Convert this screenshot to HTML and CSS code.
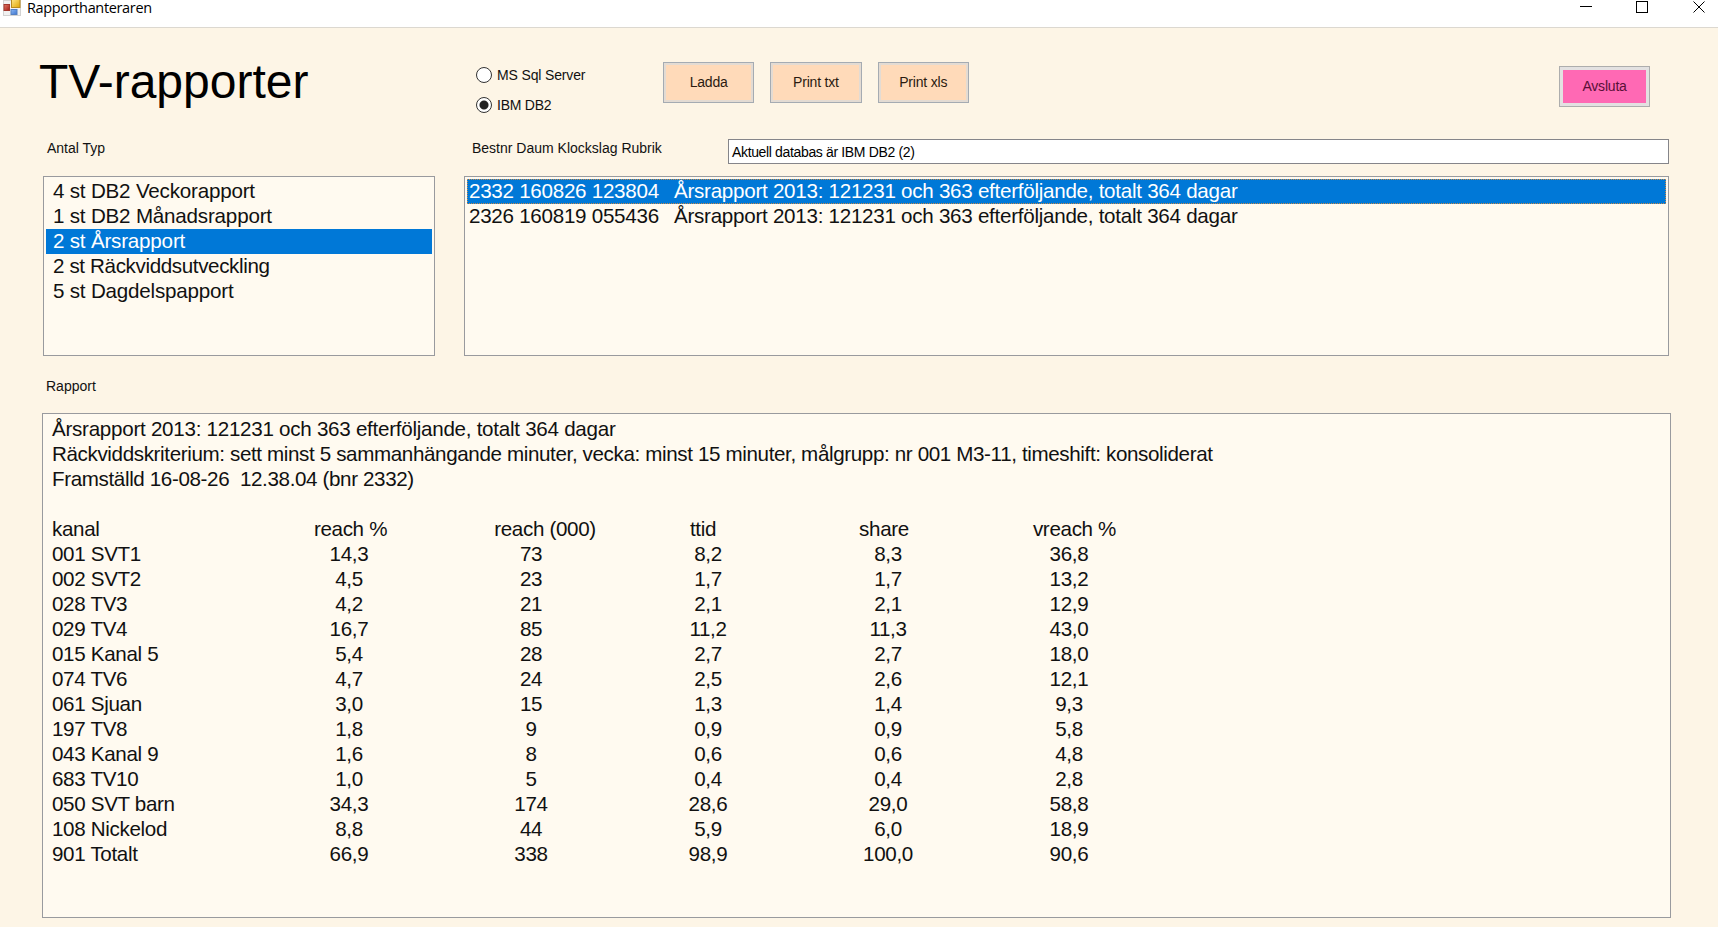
FILE: index.html
```html
<!DOCTYPE html>
<html lang="sv">
<head>
<meta charset="utf-8">
<title>Rapporthanteraren</title>
<link rel="stylesheet" href="styles.css">
</head>
<body>
<header class="titlebar">
  <svg class="app-icon" width="18" height="16" viewBox="0 0 18 16">
    <defs>
      <linearGradient id="gold" x1="0" y1="0" x2="1" y2="1"><stop offset="0" stop-color="#ffe88a"/><stop offset="1" stop-color="#e0a400"/></linearGradient>
      <linearGradient id="red" x1="0" y1="0" x2="1" y2="1"><stop offset="0" stop-color="#e07a6a"/><stop offset="1" stop-color="#a81c14"/></linearGradient>
      <linearGradient id="blue" x1="0" y1="0" x2="1" y2="1"><stop offset="0" stop-color="#8cb8f4"/><stop offset="1" stop-color="#3c74d0"/></linearGradient>
    </defs>
    <rect x="0.5" y="0.5" width="17" height="15" fill="#f1f1f1" stroke="#d2d2d2"/>
    <rect x="8.5" y="-1" width="8.5" height="8.5" fill="url(#gold)" stroke="#b98a1c"/>
    <rect x="1" y="4.5" width="5.5" height="6" fill="url(#red)" stroke="#a3382e"/>
    <rect x="8" y="9.5" width="6" height="5" fill="url(#blue)" stroke="#5580c0"/>
  </svg>
  <span class="window-title">Rapporthanteraren</span>
  <svg class="window-buttons" width="140" height="16" viewBox="0 0 140 16" fill="none" stroke="#000">
    <path d="M10 6.500h12"/>
    <rect x="66.500" y="1.500" width="11" height="11"/>
    <path d="M123.500 1.500l11 11M134.500 1.500l-11 11"/>
  </svg>
</header>
<main class="form">
  <section class="top">
    <h1 class="heading">TV-rapporter</h1>
    <div class="radios">
      <label class="radio"><span class="dot"></span><span class="radio-ms">MS Sql Server</span></label>
      <label class="radio"><span class="dot checked"></span><span class="radio-db">IBM DB2</span></label>
    </div>
    <div class="buttons">
      <button class="btn">Ladda</button>
      <button class="btn">Print txt</button>
      <button class="btn">Print xls</button>
    </div>
    <button class="btn quit">Avsluta</button>
  </section>
  <section class="labels">
    <span class="label-types">Antal Typ</span>
    <span class="label-orders">Bestnr Daum Klockslag Rubrik</span>
    <div class="status">Aktuell databas är IBM DB2 (2)</div>
  </section>
  <section class="lists">
    <ul class="box types">
      <li>4 st DB2 Veckorapport</li>
      <li>1 st DB2 Månadsrapport</li>
      <li class="selected">2 st Årsrapport</li>
      <li class="tight">2 st Räckviddsutveckling</li>
      <li>5 st Dagdelspapport</li>
    </ul>
    <ul class="box orders">
      <li class="selected focus"><span class="key">2332 160826 123804</span><span>Årsrapport 2013: 121231 och 363 efterföljande, totalt 364 dagar</span></li>
      <li><span class="key">2326 160819 055436</span><span>Årsrapport 2013: 121231 och 363 efterföljande, totalt 364 dagar</span></li>
    </ul>
  </section>
  <div class="label-report">Rapport</div>
  <section class="box report">
    <p>Årsrapport 2013: 121231 och 363 efterföljande, totalt 364 dagar</p>
    <p class="tight">Räckviddskriterium: sett minst 5 sammanhängande minuter, vecka: minst 15 minuter, målgrupp: nr 001 M3-11, timeshift: konsoliderat</p>
    <p class="tight">Framställd 16-08-26&nbsp; 12.38.04 (bnr 2332)</p>
    <table class="table">
      <colgroup><col class="c0"><col class="c1"><col class="c2"><col class="c3"><col class="c4"><col class="c5"></colgroup>
      <tr><th>kanal</th><th class="reach">reach %</th><th class="count">reach (000)</th><th class="ttid">ttid</th><th class="share">share</th><th class="vreach">vreach %</th></tr>
      <tr><td>001 SVT1</td><td>14,3</td><td>73</td><td>8,2</td><td>8,3</td><td>36,8</td></tr>
      <tr><td>002 SVT2</td><td>4,5</td><td>23</td><td>1,7</td><td>1,7</td><td>13,2</td></tr>
      <tr><td>028 TV3</td><td>4,2</td><td>21</td><td>2,1</td><td>2,1</td><td>12,9</td></tr>
      <tr><td>029 TV4</td><td>16,7</td><td>85</td><td>11,2</td><td>11,3</td><td>43,0</td></tr>
      <tr><td>015 Kanal 5</td><td>5,4</td><td>28</td><td>2,7</td><td>2,7</td><td>18,0</td></tr>
      <tr><td>074 TV6</td><td>4,7</td><td>24</td><td>2,5</td><td>2,6</td><td>12,1</td></tr>
      <tr><td>061 Sjuan</td><td>3,0</td><td>15</td><td>1,3</td><td>1,4</td><td>9,3</td></tr>
      <tr><td>197 TV8</td><td>1,8</td><td>9</td><td>0,9</td><td>0,9</td><td>5,8</td></tr>
      <tr><td>043 Kanal 9</td><td>1,6</td><td>8</td><td>0,6</td><td>0,6</td><td>4,8</td></tr>
      <tr><td>683 TV10</td><td>1,0</td><td>5</td><td>0,4</td><td>0,4</td><td>2,8</td></tr>
      <tr><td>050 SVT barn</td><td>34,3</td><td>174</td><td>28,6</td><td>29,0</td><td>58,8</td></tr>
      <tr><td>108 Nickelod</td><td>8,8</td><td>44</td><td>5,9</td><td>6,0</td><td>18,9</td></tr>
      <tr><td>901 Totalt</td><td>66,9</td><td>338</td><td>98,9</td><td>100,0</td><td>90,6</td></tr>
    </table>
  </section>
</main>
</body>
</html>
```
FILE: styles.css
```css
* { box-sizing: border-box; }
body {
  margin: 0;
  width: 1718px;
  height: 927px;
  overflow: hidden;
  background: #fdf5e6;
  color: #111;
  font-family: "Liberation Sans", Arial, sans-serif;
  font-size: 14px;
}
h1, p, ul { margin: 0; padding: 0; font-weight: normal; }

.titlebar {
  display: flex;
  align-items: flex-start;
  height: 28px;
  padding-left: 3px;
  background: #fff;
  border-bottom: 1px solid #dcd8d0;
}
.window-title {
  margin: -2px 0 0 6px;
  font: 14.5px/20px "Open Sans", "Noto Sans", sans-serif;
  letter-spacing: -0.35px;
  color: #000;
  white-space: nowrap;
}
.window-buttons { margin-left: auto; margin-right: 8px; }

.form { padding-left: 42px; }

.top { display: flex; height: 104px; }
.heading {
  width: 433px;
  margin: 26px 0 0 -3px;
  font-size: 48px;
  line-height: 56px;
  color: #000;
  white-space: nowrap;
}
.radios { width: 191px; padding: 37px 0 0 4px; }
.radio { display: flex; align-items: center; height: 20px; margin-bottom: 10px; white-space: nowrap; }
.radio-ms { letter-spacing: -0.15px; }
.radio-db { letter-spacing: -0.25px; }
.dot {
  width: 16px;
  height: 16px;
  margin-right: 5px;
  border: 1px solid #333;
  border-radius: 50%;
  background: #fff;
}
.checked { background: radial-gradient(circle, #222 0 4px, #fff 5px); }
.buttons { display: flex; gap: 16px; padding-top: 34px; }
.btn {
  width: 91.3px;
  height: 41px;
  padding: 0 0 2px;
  border: 1px solid #a5abb2;
  background: #ffdab9;
  box-shadow: inset 0 0 0 2px #e3dbd3;
  font: 14px/16px "Liberation Sans", Arial, sans-serif;
  letter-spacing: -0.2px;
  color: #2b1a10;
}
.quit {
  margin: 38px 0 0 590px;
  border: 1px solid #adadad;
  background: #ff69b4;
  box-shadow: inset 0 0 0 3px #e3e1e1;
  color: #5a1038;
}

.labels { display: flex; height: 44px; white-space: nowrap; }
.label-types { width: 430px; padding: 8px 0 0 5px; }
.label-orders { width: 256px; padding: 8px 0 0; }
.status {
  width: 941px;
  height: 25px;
  margin-top: 7px;
  padding: 4px 0 0 3px;
  border: 1px solid #85858a;
  background: #fff;
  color: #000;
  line-height: 17px;
  letter-spacing: -0.35px;
}

.box {
  border: 1px solid #999a9e;
  background: #fffaf0;
  font-size: 20.6px;
  line-height: 25px;
  letter-spacing: -0.27px;
  list-style: none;
  white-space: nowrap;
}
.lists { display: flex; gap: 29px; padding-left: 1px; }
.types, .orders { height: 180px; padding: 2px; line-height: 23px; }
.types { width: 392px; letter-spacing: -0.2px; }
.orders { width: 1205px; }
.types li { padding-left: 7px; }
.types li, .orders li { height: 25px; }
.orders li { display: flex; padding-left: 2px; }
.key { width: 205px; }
.selected { background: #0078d7; color: #fff; }
.focus { outline: 1px dotted #c88a4a; outline-offset: -1px; }
.tight { letter-spacing: -0.37px; }

.label-report { padding: 22px 0 0 4px; height: 57px; }
.report { width: 1629px; height: 505px; padding: 2px 0 0 9px; }

.table { table-layout: fixed; width: 1104px; margin-top: 25px; border-collapse: collapse; letter-spacing: -0.33px; }
.table th, .table td { height: 25px; padding: 0; font-weight: normal; text-align: center; }
.table th:first-child, .table td:first-child { text-align: left; }
.c0 { width: 206px; }
.c1 { width: 182px; }
.c2 { width: 182px; }
.c3 { width: 172px; }
.c4 { width: 188px; }
.c5 { width: 174px; }
.table .reach { padding-left: 3px; }
.table .count { padding-left: 28px; }
.table .ttid { padding-right: 10px; }
.table .share { padding-right: 8px; }
.table .vreach { padding-left: 11px; }
```
